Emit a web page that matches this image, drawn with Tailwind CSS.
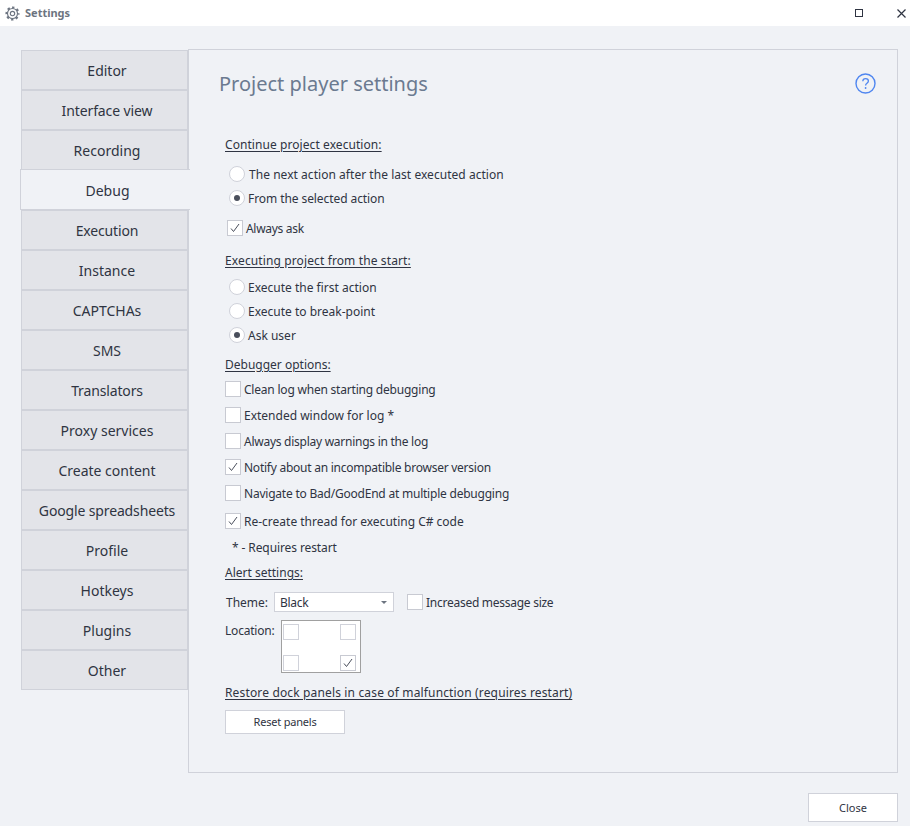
<!DOCTYPE html>
<html lang="en">
<head>
<meta charset="UTF-8">
<title>Settings</title>
<script src="https://cdn.jsdelivr.net/npm/@tailwindcss/browser@4"></script>
</head>
<body class="bg-[#f0f2f6] font-['Noto_Sans',sans-serif] text-[12px] text-[#2f3442]">
<div class="w-[910px] h-[826px] flex flex-col overflow-hidden">
  <!-- Title bar -->
  <header class="h-[26px] bg-white flex items-center">
    <svg class="ml-[5px] w-[15px] h-[15px] text-[#6c7480]" viewBox="0 0 24 24" fill="none" stroke="currentColor"><circle cx="12" cy="12" r="3.500" stroke-width="1.800"/><circle cx="12" cy="12" r="8" stroke-width="1.800"/><circle cx="12" cy="12" r="9.800" stroke-width="3" stroke-dasharray="3.800 3.900" stroke-dashoffset="1.900"/></svg>
    <span class="ml-[5px] text-[11px] font-bold text-[#6c7480]">Settings</span>
    <div class="ml-auto flex items-center">
      <span class="w-[8px] h-[8px] border border-[#2f3442] mr-[34px]"></span>
      <svg class="w-[9px] h-[9px] mr-[4px] text-[#2f3442]" viewBox="0 0 9 9" stroke="currentColor" stroke-width="1.2"><path d="M.5.5l8 8M8.500.5l-8 8"/></svg>
    </div>
  </header>

  <main class="flex pl-[21px] pt-[23px]">
    <!-- Tabs -->
    <nav class="w-[167px] pt-px flex flex-col text-[14px] text-center">
      <div class="h-10 leading-[40px] pl-[5px] bg-[#e3e4e9] border border-[#d0d2da]">Editor</div>
      <div class="h-10 leading-[40px] pl-[5px] bg-[#e3e4e9] border border-[#d0d2da] tracking-[-0.1px]">Interface view</div>
      <div class="h-10 leading-[40px] pl-[5px] bg-[#e3e4e9] border border-[#d0d2da]">Recording</div>
      <div class="relative z-10 h-[41px] -mt-px -ml-px -mr-[2px] leading-[42px] pl-[5px] pr-px bg-[#f0f2f6] border border-r-0 border-[#d0d2da]">Debug</div>
      <div class="h-10 leading-[40px] pl-[5px] bg-[#e3e4e9] border border-[#d0d2da] tracking-[-0.14px]">Execution</div>
      <div class="h-10 leading-[40px] pl-[5px] bg-[#e3e4e9] border border-[#d0d2da]">Instance</div>
      <div class="h-10 leading-[40px] pl-[5px] bg-[#e3e4e9] border border-[#d0d2da]">CAPTCHAs</div>
      <div class="h-10 leading-[40px] pl-[5px] bg-[#e3e4e9] border border-[#d0d2da]">SMS</div>
      <div class="h-10 leading-[40px] pl-[5px] bg-[#e3e4e9] border border-[#d0d2da] tracking-[-0.14px]">Translators</div>
      <div class="h-10 leading-[40px] pl-[5px] bg-[#e3e4e9] border border-[#d0d2da]">Proxy services</div>
      <div class="h-10 leading-[40px] pl-[5px] bg-[#e3e4e9] border border-[#d0d2da]">Create content</div>
      <div class="h-10 leading-[40px] pl-[5px] bg-[#e3e4e9] border border-[#d0d2da] tracking-[-0.14px]">Google spreadsheets</div>
      <div class="h-10 leading-[40px] pl-[5px] bg-[#e3e4e9] border border-[#d0d2da]">Profile</div>
      <div class="h-10 leading-[40px] pl-[5px] bg-[#e3e4e9] border border-[#d0d2da]">Hotkeys</div>
      <div class="h-10 leading-[40px] pl-[5px] bg-[#e3e4e9] border border-[#d0d2da]">Plugins</div>
      <div class="h-10 leading-[40px] pl-[5px] bg-[#e3e4e9] border border-[#d0d2da]">Other</div>
    </nav>

    <!-- Panel -->
    <section class="w-[710px] h-[724px] border border-[#d0d2da] pl-[30px] pr-[21px]">
      <div class="h-[66px] flex items-center justify-between">
        <h1 class="pt-px text-[20px] text-[#6b7a90]">Project player settings</h1>
        <svg class="w-[21px] h-[21px] text-[#4f86f0]" viewBox="0 0 21 21" fill="none" stroke="currentColor"><circle cx="10.500" cy="10.500" r="9.500" stroke-width="1.400"/><path d="M7.800 8.300c0-1.700 1.200-2.700 2.800-2.700s2.800 1 2.800 2.500c0 2.200-2.800 2.200-2.800 4.300" stroke-width="1.300"/><circle cx="10.600" cy="15" r=".9" fill="currentColor" stroke="none"/></svg>
      </div>

      <div class="ml-[6px] pt-4">
        <div class="h-6 leading-[26px] tracking-[0.07px] underline underline-offset-2">Continue project execution:</div>

        <label class="mt-1.5 h-6 flex items-center pl-1"><span class="w-4 h-4 rounded-full bg-white border border-[#d0d2da]"></span><span class="ml-1 mt-0.5 tracking-[0.04px]">The next action after the last executed action</span></label>
        <label class="h-6 flex items-center pl-1"><span class="w-4 h-4 rounded-full bg-white border border-[#d0d2da] flex items-center justify-center"><span class="w-1.5 h-1.5 rounded-full bg-[#4a4f5c]"></span></span><span class="ml-[3px] mt-0.5 tracking-[-0.08px]">From the selected action</span></label>

        <label class="mt-1.5 h-6 flex items-center pl-0.5">
          <span class="w-4 h-4 bg-white border border-[#c8cad2] flex items-center justify-center"><svg class="w-2.5 h-2.5" viewBox="0 0 10 10" fill="none" stroke="#4a4f5c"><path d="M1 5.500l2.500 3L9 1"/></svg></span>
          <span class="ml-[3px] mt-0.5 tracking-[-0.3px]">Always ask</span>
        </label>

        <div class="mt-2 h-6 leading-[26px] tracking-[0.12px] underline underline-offset-2">Executing project from the start:</div>

        <label class="mt-[3px] h-6 flex items-center pl-1"><span class="w-4 h-4 rounded-full bg-white border border-[#d0d2da]"></span><span class="ml-[3px] mt-0.5">Execute the first action</span></label>
        <label class="h-6 flex items-center pl-1"><span class="w-4 h-4 rounded-full bg-white border border-[#d0d2da]"></span><span class="ml-[3px] mt-0.5">Execute to break-point</span></label>
        <label class="h-6 flex items-center pl-1"><span class="w-4 h-4 rounded-full bg-white border border-[#d0d2da] flex items-center justify-center"><span class="w-1.5 h-1.5 rounded-full bg-[#4a4f5c]"></span></span><span class="ml-[3px] mt-0.5">Ask user</span></label>

        <div class="mt-[5px] h-6 leading-[26px] underline underline-offset-2">Debugger options:</div>

        <label class="mt-px h-6 flex items-center"><span class="w-4 h-4 bg-white border border-[#c8cad2]"></span><span class="ml-[3px] mt-0.5 tracking-[-0.21px]">Clean log when starting debugging</span></label>
        <label class="mt-0.5 h-6 flex items-center"><span class="w-4 h-4 bg-white border border-[#c8cad2]"></span><span class="ml-[3px] mt-0.5">Extended window for log *</span></label>
        <label class="mt-0.5 h-6 flex items-center"><span class="w-4 h-4 bg-white border border-[#c8cad2]"></span><span class="ml-[3px] mt-0.5 tracking-[-0.26px]">Always display warnings in the log</span></label>
        <label class="mt-0.5 h-6 flex items-center"><span class="w-4 h-4 bg-white border border-[#c8cad2] flex items-center justify-center"><svg class="w-2.5 h-2.5" viewBox="0 0 10 10" fill="none" stroke="#4a4f5c"><path d="M1 5.500l2.500 3L9 1"/></svg></span><span class="ml-[3px] mt-0.5 tracking-[-0.25px]">Notify about an incompatible browser version</span></label>
        <label class="mt-0.5 h-6 flex items-center"><span class="w-4 h-4 bg-white border border-[#c8cad2]"></span><span class="ml-[3px] mt-0.5 tracking-[-0.22px]">Navigate to Bad/GoodEnd at multiple debugging</span></label>
        <label class="mt-1 h-6 flex items-center"><span class="w-4 h-4 bg-white border border-[#c8cad2] flex items-center justify-center"><svg class="w-2.5 h-2.5" viewBox="0 0 10 10" fill="none" stroke="#4a4f5c"><path d="M1 5.500l2.500 3L9 1"/></svg></span><span class="ml-[3px] mt-0.5">Re-create thread for executing C# code</span></label>

        <div class="mt-0.5 h-6 leading-[26px] tracking-[-0.1px] pl-[7px]">* - Requires restart</div>

        <div class="mt-px h-6 leading-[26px] underline underline-offset-2">Alert settings:</div>

        <div class="mt-1.5 h-6 flex items-center">
          <span class="ml-px mt-0.5">Theme:</span>
          <div class="ml-[6px] w-[120px] h-5 bg-white border border-[#d0d2da] flex items-center justify-between pl-[5px] pr-[6px]">
            <span class="mt-0.5 tracking-[-0.3px]">Black</span>
            <span class="border-x-[3px] border-t-[3px] border-x-transparent border-t-[#6c7480]"></span>
          </div>
          <span class="ml-[13px] w-4 h-4 bg-white border border-[#c8cad2]"></span>
          <span class="ml-[3px] mt-0.5 tracking-[-0.27px]">Increased message size</span>
        </div>

        <div class="mt-1.5 flex">
          <span class="w-[56px] leading-[22px] tracking-[-0.2px]">Location:</span>
          <div class="w-[80px] h-[53px] bg-white border border-[#a0a0a0] pt-[3px] pb-px px-px flex flex-col justify-between">
            <div class="flex justify-between pr-[3px]">
              <span class="w-4 h-4 border border-[#d0d2da]"></span>
              <span class="w-4 h-4 border border-[#d0d2da]"></span>
            </div>
            <div class="flex justify-between pr-[3px]">
              <span class="w-4 h-4 border border-[#d0d2da]"></span>
              <span class="w-4 h-4 border border-[#c8cad2] flex items-center justify-center"><svg class="w-2.5 h-2.5" viewBox="0 0 10 10" fill="none" stroke="#4a4f5c"><path d="M1 5.500l2.500 3L9 1"/></svg></span>
            </div>
          </div>
        </div>

        <div class="mt-[7px] h-6 leading-[26px] tracking-[0.15px] underline underline-offset-2">Restore dock panels in case of malfunction (requires restart)</div>

        <button class="mt-1.5 w-[120px] h-6 bg-white border border-[#d0d2da] text-[11px] tracking-[-0.2px]">Reset panels</button>
      </div>
    </section>
  </main>

  <footer class="flex justify-end pr-3 pt-5">
    <button class="w-[90px] h-[29px] pt-0.5 bg-white border border-[#d0d2da] text-[11px]">Close</button>
  </footer>
</div>
</body>
</html>
